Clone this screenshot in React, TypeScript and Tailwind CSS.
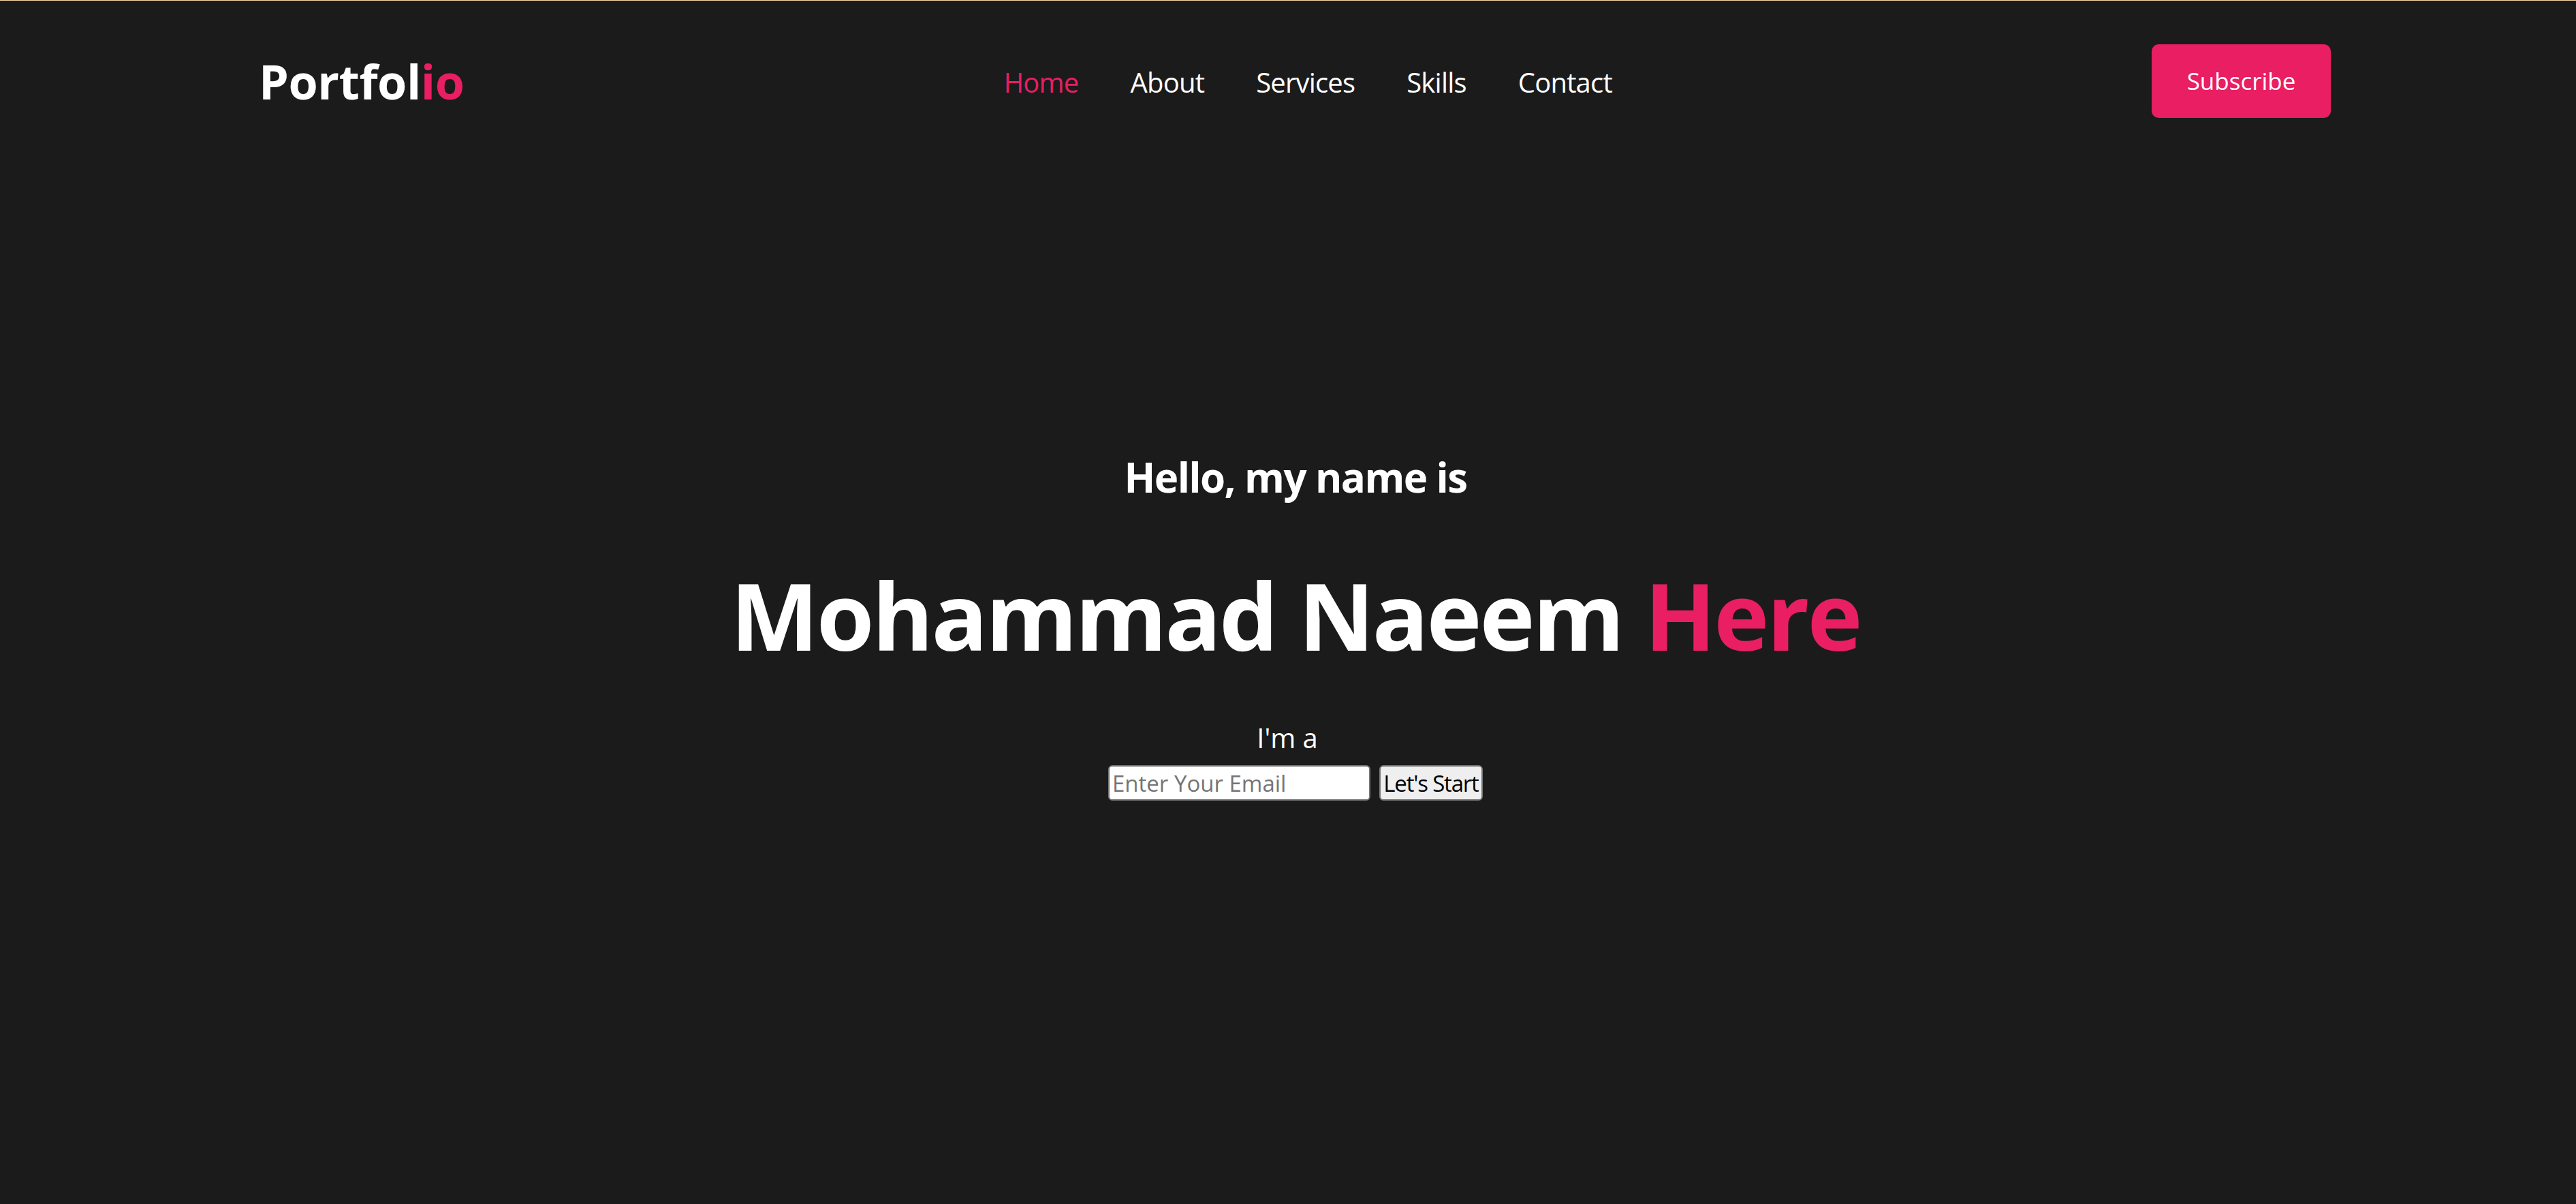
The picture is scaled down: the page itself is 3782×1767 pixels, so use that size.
export default function App() {
  const links = ['Home', 'About', 'Services', 'Skills', 'Contact'];

  return (
    <div className="min-h-[1767px] w-full bg-[#1b1b1b] font-['Open_Sans',sans-serif] text-white">
      <div className="h-px bg-[#fddca6]" />
      <header className="flex items-center justify-between pt-[64px] pl-[380px] pr-[360px]">
        <a href="#" className="text-[70px] font-bold leading-none tracking-[-0.5px]">
          Portfol<span className="text-[#e91e63]">io</span>
        </a>
        <nav className="flex items-center gap-[76px] pt-[3px]">
          {links.map((link, i) => (
            <a
              key={link}
              href="#"
              className={
                i === 0
                  ? 'text-[40px] leading-none tracking-[-0.8px] text-[#e91e63]'
                  : 'text-[40px] leading-none tracking-[-0.8px] text-white'
              }
            >
              {link}
            </a>
          ))}
        </nav>
        <button className="flex h-[108px] w-[263px] items-center justify-center rounded-[10px] bg-[#e91e63] text-[35px] text-white">
          Subscribe
        </button>
      </header>

      <section className="flex flex-col items-center pt-[497px] pl-[22px]">
        <h3 className="text-[60px] font-bold leading-none tracking-[-1.6px]">Hello, my name is</h3>
        <h1 className="mt-[104px] text-[137px] font-bold leading-none tracking-[-3px]">
          Mohammad Naeem <span className="text-[#e91e63]">Here</span>
        </h1>
        <p className="mt-[92px] pr-[24px] text-[40px] leading-none">I'm a</p>
        <form className="mt-[20px] flex items-center gap-[13px]" onSubmit={(e) => e.preventDefault()}>
          <input
            type="email"
            placeholder="Enter Your Email"
            className="h-[52px] w-[385px] rounded-[6px] border-2 border-[#767676] bg-white px-[4px] text-[33px] text-black placeholder:text-[#757575]"
          />
          <button className="h-[52px] w-[152px] whitespace-nowrap rounded-[6px] border-2 border-[#767676] bg-[#efefef] text-[33px] leading-none tracking-[-1.2px] text-black">
            Let's Start
          </button>
        </form>
      </section>
    </div>
  );
}
